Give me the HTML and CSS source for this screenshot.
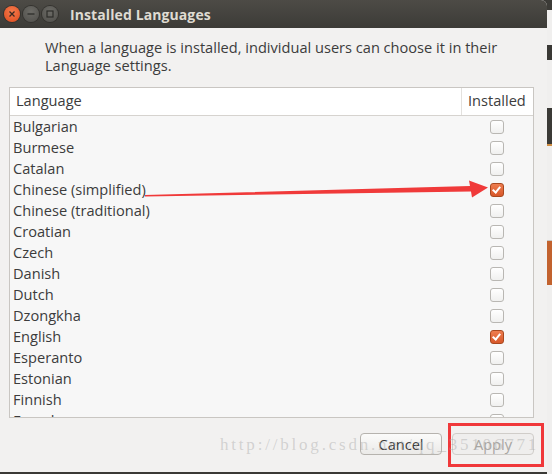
FILE: index.html
```html
<!DOCTYPE html>
<html>
<head>
<meta charset="utf-8">
<link rel="stylesheet" href="styles.css">
</head>
<body>
<div class="screen">
  <div class="window">
    <div class="titlebar">
      <div class="wbtns">
        <span class="wbtn close"><svg width="16" height="16" viewBox="0 0 16 16"><path d="M5.5 5.5 L10.5 10.5 M10.5 5.5 L5.5 10.5" stroke="#3b2a22" stroke-width="1.3" fill="none"/></svg></span>
        <span class="wbtn"><svg width="16" height="16" viewBox="0 0 16 16"><path d="M4.5 8 H11.5" stroke="#2e2d2a" stroke-width="1.3"/></svg></span>
        <span class="wbtn"><svg width="16" height="16" viewBox="0 0 16 16"><rect x="5" y="5" width="6" height="6" stroke="#2e2d2a" stroke-width="1.2" fill="none"/></svg></span>
      </div>
      <div class="title">Installed Languages</div>
    </div>
    <div class="content">
      <p class="desc">When a language is installed, individual users can choose it in their Language settings.</p>
      <div class="list">
        <div class="head">
          <div class="hcol hlang">Language</div>
          <div class="hcol hinst">Installed</div>
        </div>
        <div class="rows">
          <div class="row"><span>Bulgarian</span><i class="cb"></i></div>
          <div class="row"><span>Burmese</span><i class="cb"></i></div>
          <div class="row"><span>Catalan</span><i class="cb"></i></div>
          <div class="row"><span>Chinese (simplified)</span><i class="cb on"></i></div>
          <div class="row"><span>Chinese (traditional)</span><i class="cb"></i></div>
          <div class="row"><span>Croatian</span><i class="cb"></i></div>
          <div class="row"><span>Czech</span><i class="cb"></i></div>
          <div class="row"><span>Danish</span><i class="cb"></i></div>
          <div class="row"><span>Dutch</span><i class="cb"></i></div>
          <div class="row"><span>Dzongkha</span><i class="cb"></i></div>
          <div class="row"><span>English</span><i class="cb on"></i></div>
          <div class="row"><span>Esperanto</span><i class="cb"></i></div>
          <div class="row"><span>Estonian</span><i class="cb"></i></div>
          <div class="row"><span>Finnish</span><i class="cb"></i></div>
          <div class="row"><span>French</span><i class="cb"></i></div>
        </div>
      </div>
      <div class="actions">
        <button class="btn">Cancel</button>
        <button class="btn apply">Apply</button>
        <div class="wm">http://blog.csdn.net/qq_35106771</div>
      </div>
    </div>
    <svg class="arrow" width="552" height="474" viewBox="0 0 552 474">
      <polygon points="145,195 470,186 469,180.5 488,187.5 472,197.5 471,191.5 145,196.4" fill="#f03a3a"/>
    </svg>
    <div class="hl"></div>
  </div>
  <div class="behind">
    <div class="b1"></div><div class="b2"></div><div class="b3"></div><div class="b4"></div><div class="b5"></div><div class="b6"></div><div class="b7"></div>
  </div>
</div>
</body>
</html>
```
FILE: styles.css
```css
html, body { margin: 0; padding: 0; }
body { width: 552px; height: 474px; overflow: hidden; background: #3a3935; font-family: "Open Sans", "DejaVu Sans", sans-serif; }
.screen { display: flex; width: 552px; height: 474px; }
.window { position: relative; width: 547px; height: 472px; background: #f2f1f0; display: flex; flex-direction: column; border-top-right-radius: 6px; overflow: hidden; }
.titlebar { height: 28px; flex: none; background: linear-gradient(#4d4b46, #3c3b37); display: flex; align-items: center; }
.wbtns { display: flex; gap: 3px; padding-left: 4px; }
.wbtn { width: 16px; height: 16px; border-radius: 50%; background: radial-gradient(circle at 50% 35%, #6c6b66, #4f4e4a); box-shadow: 0 0 0 1px #34332f; display: flex; }
.wbtn.close { background: radial-gradient(circle at 50% 35%, #f47b4d, #de4a1c); }
.title { margin-left: 12px; color: #dfdbd2; font-weight: 700; font-size: 14px; letter-spacing: 0.1px; }
.content { flex: 1; display: flex; flex-direction: column; padding: 0 13px 0 9px; }
.desc { margin: 10px 0 0 36px; font-size: 14.6px; line-height: 18px; color: #3c3c3c; width: 480px; }
.list { margin-top: 13px; height: 331px; border: 1px solid #c9c6c2; background: #f7f7f7; overflow: hidden; box-sizing: border-box; width: 525px; }
.head { display: flex; background: #ffffff; border-bottom: 1px solid #d6d3cf; font-size: 14.6px; color: #3c3c3c; box-sizing: border-box; height: 28px; padding-bottom: 3px; }
.hcol { display: flex; align-items: center; }
.hlang { flex: 1; padding-left: 6px; }
.hinst { width: 72px; padding-left: 6px; border-left: 1px solid #e3e1de; box-sizing: border-box; margin-bottom: -3px; padding-bottom: 3px; }
.rows { display: flex; flex-direction: column; }
.row { height: 21px; box-sizing: border-box; padding: 0 29px 2px 3px; display: flex; align-items: center; justify-content: space-between; font-size: 14.6px; color: #3c3c3c; }
.cb { width: 12px; height: 12px; border: 1px solid #b9b7b3; border-radius: 3px; background: linear-gradient(#ffffff, #f0f0ef); display: block; position: relative; top: 1px; }
.cb.on { border-color: #a8481f; background: linear-gradient(#ee7d4f, #d8582a); }
.cb.on::after { content: ""; position: absolute; left: 3px; top: 1px; width: 3px; height: 6px; border: solid #fff; border-width: 0 2px 2px 0; transform: rotate(40deg); }
.actions { position: relative; display: flex; justify-content: flex-end; gap: 10px; margin-top: 15px; }
.btn { width: 82px; height: 22px; border: 1px solid #b6b3ae; border-radius: 4px; background: linear-gradient(#fbfbfa, #ebeae8); font-family: inherit; font-size: 14.6px; color: #3c3c3c; padding: 0; }
.btn.apply { color: #a9a6a2; border-color: #d0cdc9; background: #efeeed; }
.wm { position: absolute; z-index: 2; left: 211px; top: 2px; font-family: "Liberation Serif", serif; font-size: 17px; letter-spacing: 2.8px; color: rgba(170,170,170,0.45); white-space: nowrap; pointer-events: none; }
.arrow { position: absolute; left: 0; top: 0; pointer-events: none; }
.hl { position: absolute; left: 448px; top: 423px; width: 90px; height: 38px; border: 3px solid #f0383a; }
.behind { flex: 1; display: flex; flex-direction: column; background: #f0efee; }
.b1 { height: 10px; background: #3c3b37; }
.b2 { height: 35px; }
.b3 { height: 15px; background: #3a3935; }
.b4 { height: 48px; }
.b5 { height: 36px; background: #3b3a36; border-bottom: 2px solid #d08e43; }
.b6 { height: 94px; border-bottom: 1px solid #c9c6c2; }
.b7 { height: 44px; background: #c2622e; }
```
